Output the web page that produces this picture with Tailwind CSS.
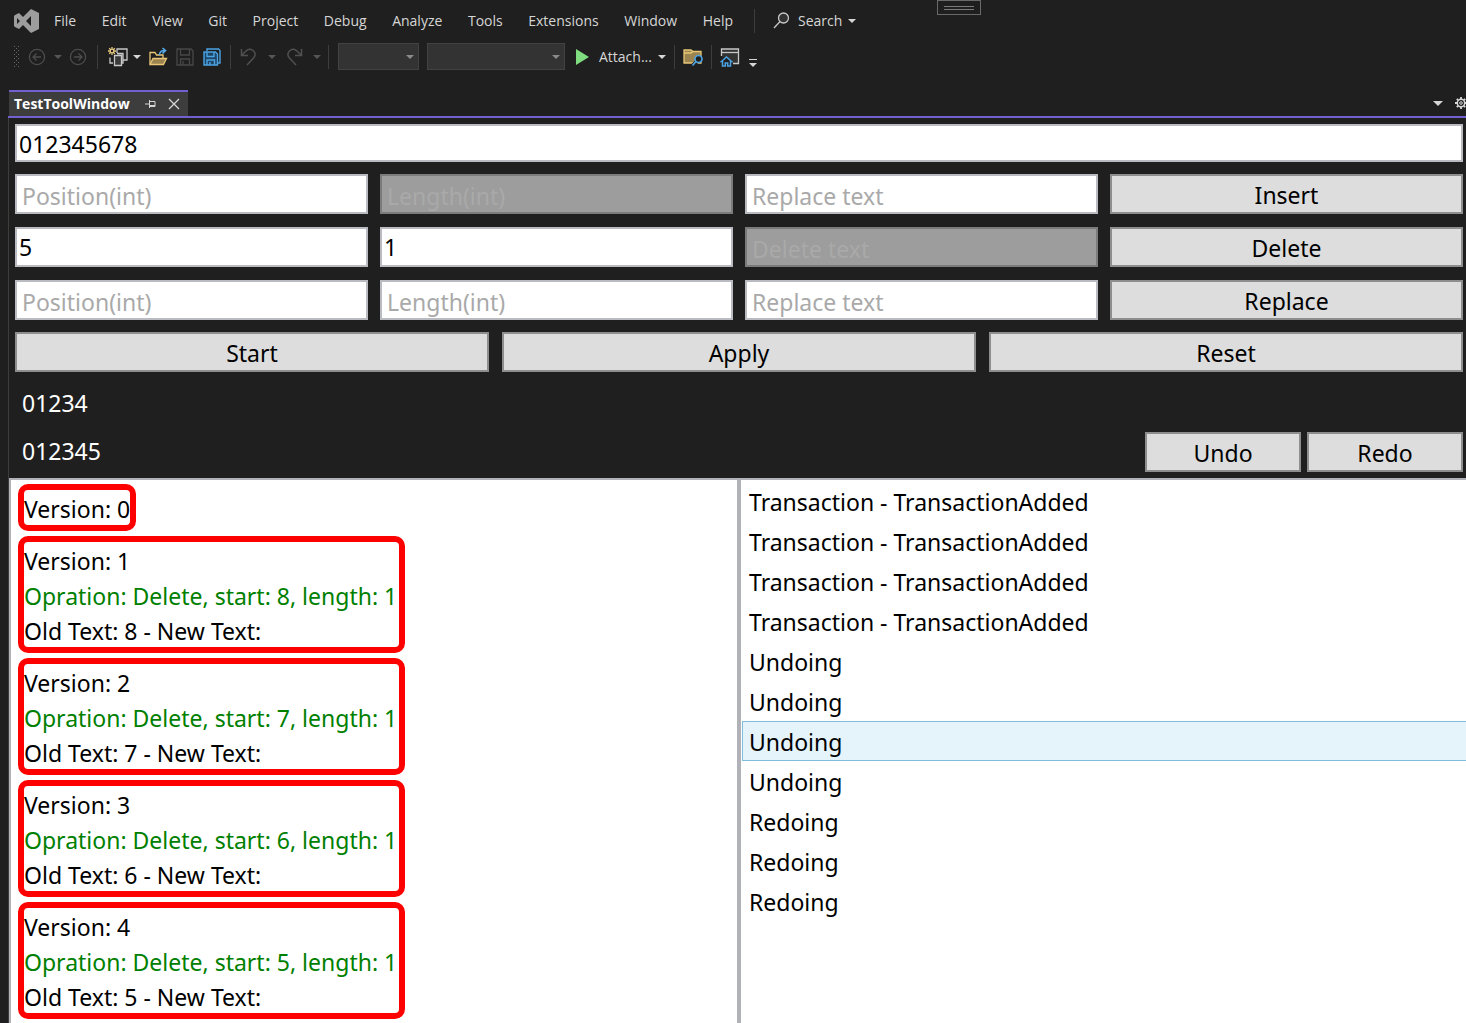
<!DOCTYPE html>
<html lang="en">
<head>
<meta charset="utf-8">
<title>TestToolWindow</title>
<script src="https://cdn.jsdelivr.net/npm/@tailwindcss/browser@4"></script>
</head>
<body class="flex h-screen flex-col overflow-hidden bg-[#1f1f1f] font-['Open_Sans','Noto_Sans',sans-serif] text-sm text-[#d6d6d6]">

<svg class="hidden">
  <symbol id="caret" viewBox="0 0 8 4"><path d="M0 0h8L4 4z" fill="currentColor"/></symbol>
</svg>

<header class="relative">
  <nav class="flex h-10 items-center pt-px pl-[14px]" aria-label="Main menu">
    <svg class="mr-[15px] h-[26px] w-[25px]" viewBox="0 0 25 26" fill="#9d9d9d"><path fill-rule="evenodd" d="M17 1l8 4v16l-8 4-8-8-4 4-4-2-1-1V8l1-1 4-2 4 4zM3 10v6l3-3zM17 8l-5 5 5 5z"/></svg>
    <div class="flex w-[679px] justify-between">
      <a href="#">File</a><a href="#">Edit</a><a href="#">View</a><a href="#">Git</a><a href="#">Project</a><a href="#">Debug</a><a href="#">Analyze</a><a href="#">Tools</a><a href="#">Extensions</a><a href="#">Window</a><a href="#">Help</a>
    </div>
    <span class="ml-[21px] h-6 w-px bg-[#3d3d3d]"></span>
    <button class="ml-[18px] flex items-center">
      <svg class="mr-2 size-[17px]" viewBox="0 0 17 17" fill="none" stroke="#c8c8c8" stroke-width="1.3"><circle cx="10.5" cy="6" r="5" fill="#333"/><path d="M7 9.5L1 16"/></svg>
      Search
      <svg class="ml-[6px] h-1 w-2"><use href="#caret"/></svg>
    </button>
  </nav>
  <button class="absolute top-0 left-[937px] flex h-[15px] w-11 flex-col items-center justify-center gap-[2px] border border-[#6a6a6a]" aria-label="Show toolbar">
    <span class="h-px w-[30px] bg-[#7a7a7a]"></span><span class="h-px w-[30px] bg-[#7a7a7a]"></span>
  </button>

  <div class="flex h-[33px] items-center pl-[13px]" role="toolbar" aria-label="Standard">
    <svg class="h-[22px] w-2" viewBox="0 0 8 22" fill="#666"><path d="M1 0h1v1H1zM5 0h1v1H5zM3 2h1v1H3zM1 4h1v1H1zM5 4h1v1H5zM3 6h1v1H3zM1 8h1v1H1zM5 8h1v1H5zM3 10h1v1H3zM1 12h1v1H1zM5 12h1v1H5zM3 14h1v1H3zM1 16h1v1H1zM5 16h1v1H5zM3 18h1v1H3zM1 20h1v1H1zM5 20h1v1H5z"/></svg>
    <button class="flex w-8 justify-center" aria-label="Back" disabled><svg class="size-[18px]" viewBox="0 0 18 18" fill="none" stroke="#4c4c4c" stroke-width="1.3"><circle cx="9" cy="9" r="7.6"/><path d="M13 9H5.500M8.500 5.500L5 9l3.500 3.500"/></svg></button>
    <button class="flex w-[10px] justify-center text-[#555]" aria-label="Back history"><svg class="h-1 w-2"><use href="#caret"/></svg></button>
    <button class="flex w-[30px] justify-center" aria-label="Forward" disabled><svg class="size-[18px]" viewBox="0 0 18 18" fill="none" stroke="#4c4c4c" stroke-width="1.3"><circle cx="9" cy="9" r="7.6"/><path d="M5 9h7.500M9.500 5.500L13 9l-3.500 3.500"/></svg></button>
    <span class="mr-2 ml-1 h-6 w-px bg-[#3d3d3d]"></span>
    <button class="flex w-6 justify-center" aria-label="New project"><svg class="size-[22px]" viewBox="0 0 22 22" fill="none" stroke="#c8c8c8" stroke-width="1.3"><path d="M10 7V3h10v11h-4"/><path d="M10 7.500h6V17h-2" fill="#555"/><path d="M7.500 9.500h7v10h-7z" fill="#3a3a3a"/><path d="M3 11.500V17h3"/><path stroke="#f0d080" d="M5 1v8M1 5h8M2.200 2.200l5.600 5.600M7.800 2.200L2.200 7.800"/><circle cx="5" cy="5" r="1.200" fill="#1f1f1f" stroke="none"/></svg></button>
    <button class="flex w-[14px] justify-center" aria-label="New options"><svg class="h-1 w-2"><use href="#caret"/></svg></button>
    <button class="flex w-[27px] justify-center" aria-label="Open"><svg class="size-5" viewBox="0 0 20 20" fill="none" stroke="#e8c878" stroke-width="1.3"><path d="M2 17V5.500h5L8.500 8H15v3"/><path d="M2 17.500L5 11.500h13.500l-3 6z" fill="#9c8450"/><path stroke="#55aaec" stroke-width="1.600" d="M11.500 8c0-3 2-4.500 5-4.500M14.500 1l3 2.500-3 3"/></svg></button>
    <button class="flex w-7 justify-center" aria-label="Save" disabled><svg class="size-[18px]" viewBox="0 0 18 18" fill="none" stroke="#484848" stroke-width="1.3"><path d="M1 1h14l2 2v14H1zM4.500 1v6h9V1M4.500 17v-6h9v6M7 13v4"/></svg></button>
    <button class="flex w-[26px] justify-center" aria-label="Save all"><svg class="size-[18px]" viewBox="0 0 18 18" fill="none" stroke="#4ba3e3" stroke-width="1.4"><path d="M4 3V1h11.500L17 2.500V15h-2"/><path d="M1 4h11.500l2 2v11H1z" fill="#1d4666"/><path d="M4 4v4.500h7V4M4 17v-5h7.500v5M7 14v3"/></svg></button>
    <span class="mr-1 ml-[5px] h-6 w-px bg-[#3d3d3d]"></span>
    <button class="flex w-7 justify-center" aria-label="Undo action" disabled><svg class="size-[18px]" viewBox="0 0 18 18" fill="none" stroke="#505050" stroke-width="1.5"><path d="M1.500 1v6.500H8M2 7l4-4c2-2 5-2 7-.5s3 4.500 1 7L7 17"/></svg></button>
    <button class="flex w-[18px] justify-center text-[#555]" aria-label="Undo list"><svg class="h-1 w-2"><use href="#caret"/></svg></button>
    <button class="flex w-[25px] justify-center" aria-label="Redo action" disabled><svg class="size-[18px]" viewBox="0 0 18 18" fill="none" stroke="#505050" stroke-width="1.5"><path d="M16.500 1v6.500H10M16 7l-4-4C10 1 7 1 5 2.500s-3 4.500-1 7l7 7.500"/></svg></button>
    <button class="flex w-[22px] justify-center text-[#555]" aria-label="Redo list"><svg class="h-1 w-2"><use href="#caret"/></svg></button>
    <span class="h-6 w-px bg-[#3d3d3d]"></span>
    <div class="relative ml-[9px] text-[#8a8a8a]">
      <select class="block h-[27px] w-[81px] appearance-none border border-[#424242] bg-[#333]" aria-label="Configuration"><option></option></select>
      <svg class="pointer-events-none absolute top-[12px] right-[5px] h-1 w-2"><use href="#caret"/></svg>
    </div>
    <div class="relative ml-2 text-[#8a8a8a]">
      <select class="block h-[27px] w-[138px] appearance-none border border-[#424242] bg-[#333]" aria-label="Platform"><option></option></select>
      <svg class="pointer-events-none absolute top-[12px] right-[5px] h-1 w-2"><use href="#caret"/></svg>
    </div>
    <button class="ml-2 flex w-[101px] items-center pl-[3px]">
      <svg class="mr-[10px] h-[18px] w-[13px]" viewBox="0 0 13 18"><path d="M0 1l13 8-13 8z" fill="#7fdc7f"/></svg>
      Attach...
      <svg class="mr-2 ml-auto h-1 w-2"><use href="#caret"/></svg>
    </button>
    <span class="h-6 w-px bg-[#3d3d3d]"></span>
    <button class="flex w-9 justify-center" aria-label="Find in files"><svg class="size-5" viewBox="0 0 20 20" fill="none" stroke="#e8c878" stroke-width="1.3"><path d="M1 3h7l2 1.500h8V16H1z" fill="#9c8450"/><path d="M1 6h7l2-1.500"/><path d="M9.500 19l4-4" stroke="#1f1f1f" stroke-width="4"/><circle cx="15.500" cy="12" r="3.500" fill="#1f1f1f" stroke="#4ba3e3" stroke-width="1.700"/><path d="M13 14.500L9.500 18.500" stroke="#4ba3e3" stroke-width="1.700"/></svg></button>
    <span class="h-6 w-px bg-[#3d3d3d]"></span>
    <button class="flex w-9 justify-center" aria-label="Start window"><svg class="size-5" viewBox="0 0 20 20" fill="none" stroke="#c8c8c8" stroke-width="1.3"><path d="M1.500 9V2h17v14.500H13" fill="#333"/><path d="M1.500 5.500h17"/><path d="M1.500 14.500l5-4.500 5 4.500h-1V19H7.700v-3H5.300v3H2.500v-4.500z" fill="#1f1f1f" stroke="#4ba3e3" stroke-width="1.500"/></svg></button>
    <button class="flex w-[10px] justify-center pt-3" aria-label="Toolbar options"><svg class="h-2 w-2" viewBox="0 0 8 8" fill="#d6d6d6"><path d="M0 0h8v1H0zM0 4h8L4 8z"/></svg></button>
  </div>
</header>

<main class="mt-[17px] flex min-h-0 flex-1 flex-col pl-2">
  <div class="flex h-7 items-center border-b-2 border-[#7160d0] pl-px">
    <div class="flex h-full w-[179px] items-center border-t-2 border-[#7160d0] bg-[#3d3d3d] pl-[5px] font-bold text-white">
      <span class="w-[131px]">TestToolWindow</span>
      <button aria-label="Pin"><svg class="h-[10px] w-[11px]" viewBox="0 0 11 10" fill="none" stroke="#d6d6d6"><path d="M0 5h4M4.500 1v8M5 2.500h5v5H5M5 6.500h5"/></svg></button>
      <button class="ml-3" aria-label="Close"><svg class="size-3" viewBox="0 0 12 12" stroke="#d6d6d6" stroke-width="1.3"><path d="M1 1l10 10M11 1L1 11"/></svg></button>
    </div>
    <button class="ml-auto" aria-label="Window list"><svg class="h-[5px] w-[10px]"><use href="#caret"/></svg></button>
    <button class="ml-3 w-[11px] overflow-hidden" aria-label="Options"><svg class="size-3" viewBox="0 0 12 12" fill="none" stroke="#d6d6d6"><circle cx="6" cy="6" r="3.700" stroke-width="1.500"/><circle cx="6" cy="6" r="1.300"/><path stroke-width="1.800" d="M6 0v2M6 10v2M0 6h2M10 6h2M1.800 1.800l1.400 1.400M8.800 8.800l1.400 1.400M10.200 1.800L8.800 3.200M3.200 8.800l-1.400 1.400"/></svg></button>
  </div>

  <div class="flex min-h-0 flex-1 flex-col border-l border-[#3d3d3d] font-['Noto_Sans','Open_Sans',sans-serif] text-[23px] leading-[35px] text-black">
    <form class="flex flex-col gap-3 pt-[6px] pr-[3px] pl-[6px]">
      <input class="h-[38px] w-full border-2 border-[#b9bbc0] bg-white px-[2px] pt-[2px]" aria-label="Text" value="012345678">
      <div class="grid grid-cols-4 gap-x-3 gap-y-[13px]">
        <input class="h-10 min-w-0 border-2 border-[#b9bbc0] bg-white px-[5px] pt-1 placeholder:text-[#a9a9a9]" aria-label="Insert position" placeholder="Position(int)">
        <input class="h-10 min-w-0 border-2 border-[#7b7b7b] bg-[#9d9d9d] px-[5px] pt-1 placeholder:text-[#a9a9a9]" aria-label="Insert length" placeholder="Length(int)" disabled>
        <input class="h-10 min-w-0 border-2 border-[#b9bbc0] bg-white px-[5px] pt-1 placeholder:text-[#a9a9a9]" aria-label="Insert text" placeholder="Replace text">
        <button type="button" class="h-10 border-2 border-[#8e8e8e] bg-[#ddd] pt-[2px]">Insert</button>
        <input class="h-10 min-w-0 border-2 border-[#b9bbc0] bg-white px-[2px]" aria-label="Delete position" value="5">
        <input class="h-10 min-w-0 border-2 border-[#b9bbc0] bg-white px-[2px]" aria-label="Delete length" value="1">
        <input class="h-10 min-w-0 border-2 border-[#7b7b7b] bg-[#9d9d9d] px-[5px] pt-1 placeholder:text-[#a9a9a9]" aria-label="Delete text" placeholder="Delete text" disabled>
        <button type="button" class="h-10 border-2 border-[#8e8e8e] bg-[#ddd] pt-[2px]">Delete</button>
        <input class="h-10 min-w-0 border-2 border-[#b9bbc0] bg-white px-[5px] pt-1 placeholder:text-[#a9a9a9]" aria-label="Replace position" placeholder="Position(int)">
        <input class="h-10 min-w-0 border-2 border-[#b9bbc0] bg-white px-[5px] pt-1 placeholder:text-[#a9a9a9]" aria-label="Replace length" placeholder="Length(int)">
        <input class="h-10 min-w-0 border-2 border-[#b9bbc0] bg-white px-[5px] pt-1 placeholder:text-[#a9a9a9]" aria-label="Replacement text" placeholder="Replace text">
        <button type="button" class="h-10 border-2 border-[#8e8e8e] bg-[#ddd] pt-[2px]">Replace</button>
      </div>
      <div class="grid grid-cols-3 gap-[13px]">
        <button type="button" class="h-10 border-2 border-[#8e8e8e] bg-[#ddd] pt-[2px]">Start</button>
        <button type="button" class="h-10 border-2 border-[#8e8e8e] bg-[#ddd] pt-[2px]">Apply</button>
        <button type="button" class="h-10 border-2 border-[#8e8e8e] bg-[#ddd] pt-[2px]">Reset</button>
      </div>
    </form>
    <p class="mt-[14px] pl-[13px] text-white">01234</p>
    <div class="mt-[11px] mb-[6px] flex h-10 gap-[6px] pr-[3px] pl-[13px]">
      <p class="mr-auto pt-[2px] text-white">012345</p>
      <button type="button" class="h-10 w-[156px] border-2 border-[#8e8e8e] bg-[#ddd] pt-[2px]">Undo</button>
      <button type="button" class="h-10 w-[156px] border-2 border-[#8e8e8e] bg-[#ddd] pt-[2px]">Redo</button>
    </div>

    <div class="-mr-[3px] grid min-h-0 flex-1 grid-cols-2">
      <ul class="flex flex-col items-start gap-[5px] overflow-hidden border-2 border-b-0 border-[#b0b2b7] bg-white pt-1 pl-[7px] whitespace-nowrap *:shrink-0 *:rounded-[10px] *:border-6 *:border-[#f00] *:pt-[2px]">
        <li><p class="-mb-[2px]">Version: 0</p></li>
        <li class="min-w-[387px]"><p>Version: 1</p><p class="text-[#008000]">Opration: Delete, start: 8, length: 1</p><p class="-mb-[2px]">Old Text: 8 - New Text:</p></li>
        <li class="min-w-[387px]"><p>Version: 2</p><p class="text-[#008000]">Opration: Delete, start: 7, length: 1</p><p class="-mb-[2px]">Old Text: 7 - New Text:</p></li>
        <li class="min-w-[387px]"><p>Version: 3</p><p class="text-[#008000]">Opration: Delete, start: 6, length: 1</p><p class="-mb-[2px]">Old Text: 6 - New Text:</p></li>
        <li class="min-w-[387px]"><p>Version: 4</p><p class="text-[#008000]">Opration: Delete, start: 5, length: 1</p><p class="-mb-[2px]">Old Text: 5 - New Text:</p></li>
      </ul>
      <ul class="overflow-hidden border-t-2 border-l-2 border-[#b0b2b7] bg-white pt-px pl-px *:h-10 *:border *:border-r-0 *:px-[6px] *:leading-[40px]">
        <li class="border-transparent">Transaction - TransactionAdded</li>
        <li class="border-transparent">Transaction - TransactionAdded</li>
        <li class="border-transparent">Transaction - TransactionAdded</li>
        <li class="border-transparent">Transaction - TransactionAdded</li>
        <li class="border-transparent">Undoing</li>
        <li class="border-transparent">Undoing</li>
        <li class="border-[#7fbfdc] bg-[#e5f3fb]">Undoing</li>
        <li class="border-transparent">Undoing</li>
        <li class="border-transparent">Redoing</li>
        <li class="border-transparent">Redoing</li>
        <li class="border-transparent">Redoing</li>
      </ul>
    </div>
  </div>
</main>
</body>
</html>
